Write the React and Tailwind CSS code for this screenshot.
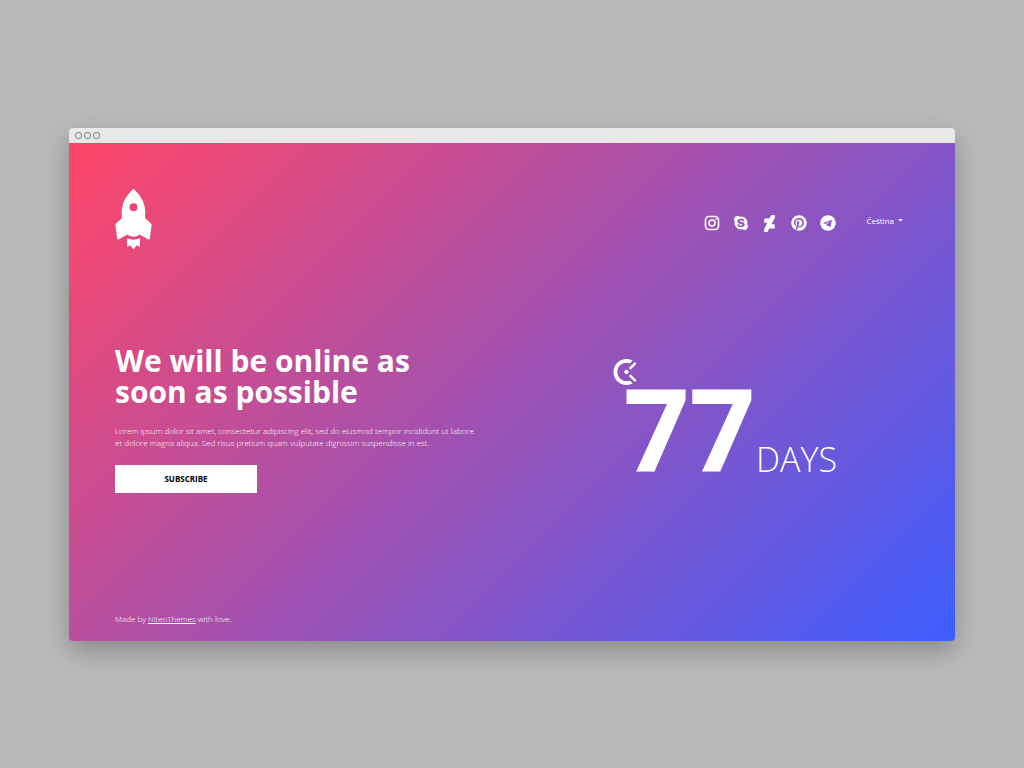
import { FaSkype, FaDeviantart, FaPinterest, FaTelegram } from "react-icons/fa";
import { SiClockify } from "react-icons/si";

function Instagram({ className }) {
  return (
    <svg viewBox="0 0 16 16" className={className} fill="none" stroke="currentColor" strokeWidth="1.6" aria-hidden="true">
      <rect x="1.500" y="1.500" width="13" height="13" rx="3.500" />
      <circle cx="8" cy="8" r="3" />
      <circle cx="11.900" cy="4.100" r=".9" fill="currentColor" stroke="none" />
    </svg>
  );
}

const socials = [
  { name: "Instagram", Icon: Instagram, size: "size-4" },
  { name: "Skype", Icon: FaSkype, size: "size-4" },
  { name: "DeviantArt", Icon: FaDeviantart, size: "size-[17px]" },
  { name: "Pinterest", Icon: FaPinterest, size: "size-4" },
  { name: "Telegram", Icon: FaTelegram, size: "size-4" },
];

function Rocket() {
  return (
    <svg viewBox="0 0 37 61" className="h-[61px] w-[37px]" fill="currentColor" aria-hidden="true">
      <path
        fillRule="evenodd"
        d="M18.5 0C13 4.500 8.500 11 7.200 18.500C6.500 22.500 6.500 26 7 29L1 34.500Q.2 35.400 .4 36.500L2.200 49.500Q2.500 51 4 50.300L12.500 45.500C14.300 47.300 16.200 47.600 18.500 47.600C20.800 47.600 22.700 47.300 24.500 45.500L33 50.300Q34.500 51 34.800 49.500L36.600 36.500Q36.800 35.400 36 34.500L30 29C30.500 26 30.500 22.500 29.800 18.500C28.500 11 24 4.500 18.500 0ZM18.500 14.300a4 4 0 1 1 0 8a4 4 0 1 1 0-8Z"
      />
      <path d="M12 49.300Q18.500 52 25 49.300L24.800 58L21.700 56.200L18.500 60.500L15.300 56.200L12.200 58Z" />
    </svg>
  );
}

export default function App() {
  return (
    <div className="flex min-h-screen items-center justify-center bg-[#b9b9b9] px-[69px] font-['Open_Sans',sans-serif]">
      <div className="w-full overflow-hidden rounded shadow-[0_10px_24px_rgba(0,0,0,0.25)]">
        <div className="flex h-[15px] items-center gap-1 bg-[#e8e8e8] pl-[7px]">
          <span className="size-[5px] rounded-full ring-1 ring-[#8c8c8c]" />
          <span className="size-[5px] rounded-full ring-1 ring-[#8c8c8c]" />
          <span className="size-[5px] rounded-full ring-1 ring-[#8c8c8c]" />
        </div>
        <div className="flex flex-col bg-[linear-gradient(135deg,#ff4667,#3d5eff)] px-[46px] pb-4 text-white">
          <header className="flex items-start justify-between pt-[46px]">
            <a href="#home" aria-label="Home">
              <Rocket />
            </a>
            <div className="flex items-start pt-[26px]">
              <nav aria-label="Social links" className="flex items-center gap-3">
                {socials.map(({ name, Icon, size }) => (
                  <a key={name} href={"#" + name} aria-label={name} className="flex h-[17px] w-[17px] items-center justify-center">
                    <Icon className={size} />
                  </a>
                ))}
              </nav>
              <button type="button" className="mr-1.5 ml-[30px] flex items-center gap-1 text-[8px] leading-3">
                Čeština
                <svg viewBox="0 0 5 3" className="h-[3px] w-[5px]" fill="currentColor" aria-hidden="true">
                  <path d="M0 0H5L2.500 2.500Z" />
                </svg>
              </button>
            </div>
          </header>
          <main className="flex items-start justify-between pt-[95px]">
            <section>
              <h1 className="text-[30px] leading-[31px] font-bold">
                We will be online as
                <br />
                soon as possible
              </h1>
              <p className="pt-[18px] text-[8px] leading-3 font-light">
                Lorem ipsum dolor sit amet, consectetur adipiscing elit, sed do eiusmod tempor incididunt ut labore
                <br />
                et dolore magna aliqua. Sed risus pretium quam vulputate dignissim suspendisse in est.
              </p>
              <button type="button" className="mt-4 h-7 w-[142px] bg-white text-[8px] font-bold text-black">
                SUBSCRIBE
              </button>
            </section>
            <section className="mr-[72px] pt-3.5">
              <SiClockify className="size-[26px]" aria-hidden="true" />
              <p className="flex items-baseline gap-px pl-3 leading-[86px]">
                <span className="text-[115px] font-bold">77</span>
                <span className="text-[34px] font-light">DAYS</span>
              </p>
            </section>
          </main>
          <footer className="pt-[111px] text-[8px] leading-3 font-light">
            Made by{" "}
            <a href="#niteothemes" className="underline">
              NiteoThemes
            </a>{" "}
            with love.
          </footer>
        </div>
      </div>
    </div>
  );
}
